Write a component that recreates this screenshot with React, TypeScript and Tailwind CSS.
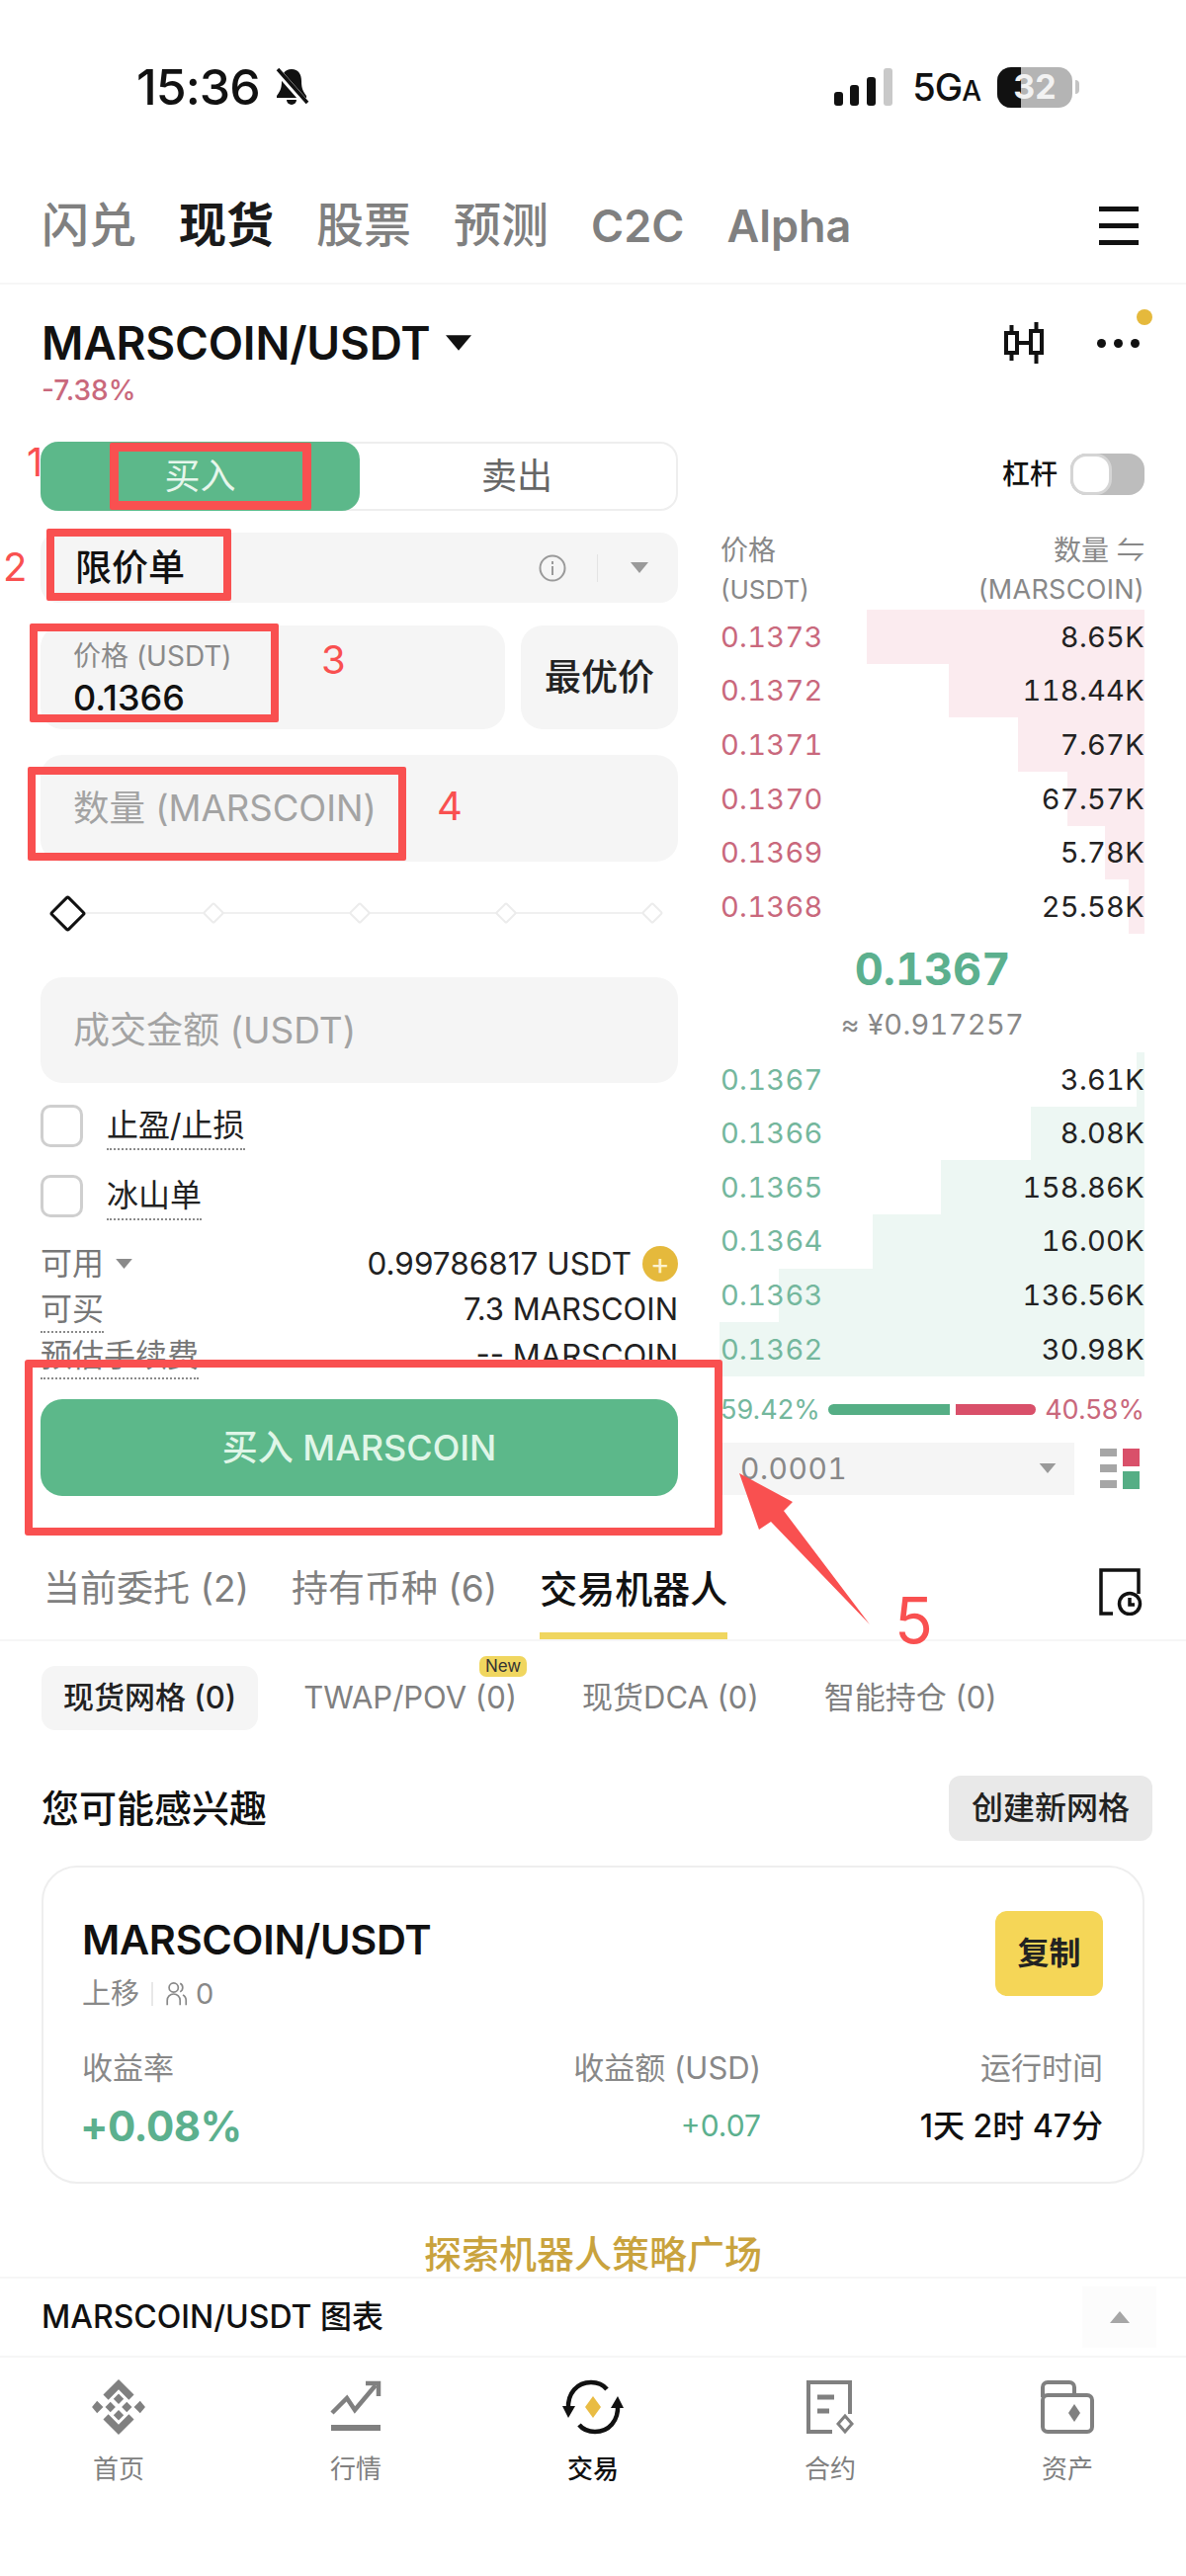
import { CSSProperties } from "react";

const asks = [
  { price: "0.1373", qty: "8.65K", depth: 281 },
  { price: "0.1372", qty: "118.44K", depth: 198 },
  { price: "0.1371", qty: "7.67K", depth: 128 },
  { price: "0.1370", qty: "67.57K", depth: 78 },
  { price: "0.1369", qty: "5.78K", depth: 40 },
  { price: "0.1368", qty: "25.58K", depth: 16 },
];

const bids = [
  { price: "0.1367", qty: "3.61K", depth: 8 },
  { price: "0.1366", qty: "8.08K", depth: 115 },
  { price: "0.1365", qty: "158.86K", depth: 206 },
  { price: "0.1364", qty: "16.00K", depth: 275 },
  { price: "0.1363", qty: "136.56K", depth: 370 },
  { price: "0.1362", qty: "30.98K", depth: 430 },
];

const Caret = ({ className, up }: { className: string; up?: boolean }) => (
  <svg viewBox="0 0 20 12" className={className} fill="currentColor">
    <polygon points={up ? "10,0 20,12 0,12" : "0,0 20,0 10,12"} />
  </svg>
);

const BookRow = ({
  price,
  qty,
  depth,
  side,
}: {
  price: string;
  qty: string;
  depth: number;
  side: "ask" | "bid";
}) => {
  const barStyle: CSSProperties = { width: depth };
  return (
    <div className="relative flex h-[54.67px] items-center justify-between text-[29px] tabular-nums tracking-[0.3px]">
      <div
        className={`absolute right-0 top-0 h-full ${side === "ask" ? "bg-[#fbebef]" : "bg-[#edf7f3]"}`}
        style={barStyle}
      />
      <span className={`relative ${side === "ask" ? "text-[#c9687c]" : "text-[#74b79d]"}`}>{price}</span>
      <span className="relative text-[#222]">{qty}</span>
    </div>
  );
};

const StatusBar = () => (
  <div className="flex h-[40px] items-center justify-between pl-[138px] pr-[108px]">
    <div className="flex items-center gap-[14px]">
      <span className="text-[50px] font-medium leading-none tracking-[-1px] text-[#111]">15:36</span>
      <svg viewBox="0 0 36 40" className="h-[40px] w-[36px]">
        <path d="M18 2c-7 0-10 5-10 12 0 8-2 11-5 15v2h30v-2c-3-4-5-7-5-15 0-7-3-12-10-12z" fill="#111" />
        <path d="M13 33a5 5 0 0 0 10 0z" fill="#111" />
        <path d="M3 3l30 34" stroke="#fff" strokeWidth="7" />
        <path d="M4 2l30 34" stroke="#111" strokeWidth="3.5" />
      </svg>
    </div>
    <div className="flex items-center">
      <svg viewBox="0 0 60 38" className="h-[38px] w-[60px]">
        <rect x="0" y="24" width="9" height="14" rx="3" fill="#111" />
        <rect x="16" y="17" width="9" height="21" rx="3" fill="#111" />
        <rect x="33" y="9" width="9" height="29" rx="3" fill="#111" />
        <rect x="50" y="0" width="9" height="38" rx="3" fill="#c9c9c9" />
      </svg>
      <span className="ml-[19px] text-[38px] font-medium leading-none tracking-[-1px] text-[#111]">
        5G<span className="text-[28px]">A</span>
      </span>
      <div className="relative ml-[17px] flex h-[41px] w-[76px] items-center justify-center overflow-hidden rounded-[14px] bg-[#b4b4b4]">
        <div className="absolute left-0 top-0 h-full w-[24px] bg-[#111]" />
        <span className="relative text-[34px] font-bold leading-none text-[#f2f2f2]">32</span>
      </div>
      <div className="ml-[3px] h-[14px] w-[4px] rounded-r-full bg-[#c4c4c4]" />
    </div>
  </div>
);

const TopTabs = () => (
  <div className="mt-[85px] flex h-[70px] items-center justify-between pl-[42px] pr-[48px]">
    <div className="flex items-center gap-[43px] text-[48px] font-medium leading-none text-[#808080]">
      <span>闪兑</span>
      <span className="font-bold text-[#1a1a1a]">现货</span>
      <span>股票</span>
      <span>预测</span>
      <span className="text-[45px] font-semibold">C2C</span>
      <span className="text-[45px] font-semibold">Alpha</span>
    </div>
    <div className="flex flex-col gap-[12px]">
      <div className="h-[5px] w-[40px] bg-[#111]" />
      <div className="h-[5px] w-[40px] bg-[#111]" />
      <div className="h-[5px] w-[40px] bg-[#111]" />
    </div>
  </div>
);

const PairHeader = () => (
  <div className="flex items-start justify-between pl-[42px] pr-[34px] pt-[27px]">
    <div>
      <div className="flex h-[64px] items-center">
        <span className="text-[46px] font-semibold leading-none tracking-[-0.2px] text-[#111]">MARSCOIN/USDT</span>
        <Caret className="ml-[16px] h-[16px] w-[26px] text-[#111]" />
      </div>
      <div className="mt-[-4px] text-[28px] font-medium leading-[40px] text-[#c9687c]">-7.38%</div>
    </div>
    <div className="relative flex h-[64px] items-center gap-[54px] pr-[13px]">
      <svg viewBox="0 0 40 46" className="h-[46px] w-[40px]" fill="none" stroke="#111" strokeWidth="4">
        <rect x="2" y="13" width="11" height="20" />
        <rect x="27" y="11" width="11" height="22" />
        <path d="M7.5 5v8M7.5 33v8M32.5 2v9M32.5 33v11M13 23h14" />
      </svg>
      <div className="flex gap-[8px]">
        <div className="h-[9px] w-[9px] rounded-full bg-[#111]" />
        <div className="h-[9px] w-[9px] rounded-full bg-[#111]" />
        <div className="h-[9px] w-[9px] rounded-full bg-[#111]" />
      </div>
      <div className="absolute right-0 top-[-2px] h-[16px] w-[16px] rounded-full bg-[#e5b93c]" />
    </div>
  </div>
);

const OrderForm = () => (
  <div className="w-[645px]">
    {/* Buy / sell switch */}
    <div className="flex h-[70px] rounded-[18px] border-2 border-[#eeeeee] text-[36px]">
      <div className="m-[-2px] flex w-[323px] items-center justify-center rounded-[18px] bg-[#5cb88a] text-[#e6f6ec]">
        买入
      </div>
      <div className="flex flex-1 items-center justify-center text-[#666]">卖出</div>
    </div>

    <div className="mt-[22px] flex h-[71px] items-center rounded-[18px] bg-[#f5f5f5] pl-[35px] pr-[30px]">
      <span className="text-[37px] font-medium text-[#111]">限价单</span>
      <svg viewBox="0 0 28 28" className="ml-auto h-[28px] w-[28px]" fill="none" stroke="#9a9a9a" strokeWidth="2">
        <circle cx="14" cy="14" r="12.5" />
        <path d="M14 12v9M14 7v3" />
      </svg>
      <div className="ml-[31px] h-[28px] w-[1px] bg-[#e4e4e4]" />
      <Caret className="ml-[33px] h-[11px] w-[18px] text-[#9a9a9a]" />
    </div>

    <div className="mt-[23px] flex gap-[16px]">
      <div className="flex h-[105px] w-[470px] flex-col justify-center rounded-[22px] bg-[#f5f5f5] pl-[33px]">
        <div className="text-[28px] leading-[40px] text-[#8a8a8a]">价格 (USDT)</div>
        <div className="text-[36px] font-medium leading-[44px] text-[#111]">0.1366</div>
      </div>
      <div className="flex h-[105px] flex-1 items-center justify-center rounded-[22px] bg-[#f5f5f5] text-[37px] font-medium text-[#222]">
        最优价
      </div>
    </div>

    <div className="mt-[26px] flex h-[108px] items-center rounded-[22px] bg-[#f5f5f5] pl-[33px] text-[36.5px] text-[#a3a3a3]">
      数量 (MARSCOIN)
    </div>

    {/* Percentage slider */}
    <div className="relative mt-[32px] flex h-[40px] items-center justify-between pl-[7px] pr-[6px]">
      <div className="absolute left-[27px] right-[26px] top-[19px] h-[2px] bg-[#f0f0f0]" />
      <div className="relative flex w-[40px] justify-center">
        <div className="h-[27px] w-[27px] rotate-45 rounded-[3px] border-[3px] border-[#111] bg-white" />
      </div>
      {[0, 1, 2, 3].map((i) => (
        <div key={i} className="relative flex w-[40px] justify-center">
          <div className="h-[16px] w-[16px] rotate-45 rounded-[2px] border-2 border-[#ececec] bg-white" />
        </div>
      ))}
    </div>

    <div className="mt-[45px] flex h-[107px] items-center rounded-[22px] bg-[#f5f5f5] pl-[33px] text-[37px] text-[#a3a3a3]">
      成交金额 (USDT)
    </div>

    <div className="mt-[22px] flex h-[43px] items-center gap-[24px]">
      <div className="h-[43px] w-[43px] rounded-[10px] border-[3px] border-[#cfcfcf]" />
      <span className="h-[48px] border-b-2 border-dotted border-[#8a8a8a] text-[32px] leading-[46px] text-[#222]">
        止盈/止损
      </span>
    </div>
    <div className="mt-[28px] flex h-[43px] items-center gap-[24px]">
      <div className="h-[43px] w-[43px] rounded-[10px] border-[3px] border-[#cfcfcf]" />
      <span className="h-[48px] border-b-2 border-dotted border-[#8a8a8a] text-[32px] leading-[46px] text-[#222]">
        冰山单
      </span>
    </div>

    <div className="mt-[23px] text-[31px]">
      <div className="flex h-[47px] items-center justify-between">
        <div className="flex items-center gap-[12px] text-[32px] text-[#777]">
          可用
          <Caret className="h-[10px] w-[17px] text-[#8a8a8a]" />
        </div>
        <div className="flex items-center gap-[11px] text-[31.500px] text-[#222]">
          0.99786817 USDT
          <div className="flex h-[36px] w-[36px] items-center justify-center rounded-full bg-[#e5b93c] text-[30px] leading-none text-[#fdf3d0]">
            +
          </div>
        </div>
      </div>
      <div className="flex h-[47px] items-center justify-between">
        <span className="h-[47px] border-b-2 border-dotted border-[#8a8a8a] text-[32px] leading-[45px] text-[#777]">
          可买
        </span>
        <span className="text-[#222]">7.3 MARSCOIN</span>
      </div>
      <div className="flex h-[47px] items-center justify-between">
        <span className="h-[47px] border-b-2 border-dotted border-[#8a8a8a] text-[32px] leading-[45px] text-[#777]">
          预估手续费
        </span>
        <span className="text-[#222]">-- MARSCOIN</span>
      </div>
    </div>

    <div className="mt-[20px] flex h-[98px] items-center justify-center rounded-[22px] bg-[#5cb88a] text-[36px] font-medium text-[#e0f6e8]">
      买入 MARSCOIN
    </div>
  </div>
);

const OrderBook = () => (
  <div className="w-[429px]">
    <div className="mt-[12px] flex h-[42px] items-center justify-end gap-[13px]">
      <span className="text-[28px] font-medium text-[#111]">杠杆</span>
      <div className="flex h-[42px] w-[75px] rounded-[16px] bg-[#bdbdbd]">
        <div className="h-[42px] w-[42px] rounded-[16px] border-[3px] border-[#d5d5d5] bg-white" />
      </div>
    </div>

    <div className="mt-[36px] flex h-[80px] justify-between text-[27px] leading-[40px] text-[#888]">
      <div>
        <div className="text-[28px]">价格</div>
        <div className="text-[26px]">(USDT)</div>
      </div>
      <div className="text-right">
        <div className="text-[28px]">数量 ⇋</div>
        <div className="tracking-[0.3px]">(MARSCOIN)</div>
      </div>
    </div>

    {asks.map((row) => (
      <BookRow key={row.price} {...row} side="ask" />
    ))}

    <div className="flex h-[120px] flex-col items-center pt-[6px] tabular-nums">
      <div className="text-[45px] font-bold leading-[60px] text-[#5cb08e]">0.1367</div>
      <div className="mt-[6px] text-[29px] leading-[40px] tracking-[0.3px] text-[#888]">≈ ¥0.917257</div>
    </div>

    {bids.map((row) => (
      <BookRow key={row.price} {...row} side="bid" />
    ))}

    <div className="mt-[19px] flex h-[30px] items-center justify-between text-[27px]">
      <span className="text-[#74b79d]">59.42%</span>
      <div className="flex items-center gap-[6px]">
        <div className="h-[11px] w-[123px] rounded-l-full bg-[#55ae85]" />
        <div className="h-[11px] w-[81px] rounded-r-full bg-[#d9506a]" />
      </div>
      <span className="text-[#c9687c]">40.58%</span>
    </div>

    <div className="mt-[18px] flex items-center justify-between">
      <div className="flex h-[53px] w-[358px] items-center justify-between bg-[#f5f5f5] pl-[20px] pr-[18px] text-[30px] tabular-nums tracking-[0.5px] text-[#888]">
        0.0001
        <Caret className="h-[10px] w-[18px] text-[#9a9a9a]" />
      </div>
      <div className="mr-[5px] flex gap-[6px]">
        <div className="flex flex-col gap-[8px]">
          <div className="h-[8px] w-[17px] bg-[#a6a6a6]" />
          <div className="h-[8px] w-[17px] bg-[#a6a6a6]" />
          <div className="h-[8px] w-[17px] bg-[#a6a6a6]" />
        </div>
        <div className="flex flex-col gap-[5px]">
          <div className="h-[18px] w-[17px] bg-[#d9506a]" />
          <div className="h-[18px] w-[17px] bg-[#55ae85]" />
        </div>
      </div>
    </div>
  </div>
);

const HistoryTabs = () => (
  <div className="mt-[47px] flex h-[100px] items-stretch justify-between border-b-2 border-[#f6f6f6] pl-[44px] pr-[44px] text-[37px]">
    <div className="flex gap-[43px]">
      <div className="flex items-center border-b-[7px] border-transparent pt-[3px] text-[#808080]">当前委托 (2)</div>
      <div className="flex items-center border-b-[7px] border-transparent pt-[3px] text-[#808080]">持有币种 (6)</div>
      <div className="flex items-center border-b-[7px] border-[#f0d65f] pt-[3px] text-[38px] font-medium text-[#111]">
        交易机器人
      </div>
    </div>
    <svg viewBox="0 0 44 48" className="mt-[26px] h-[48px] w-[44px]" fill="none" stroke="#111" strokeWidth="3.5">
      <path d="M14 46H2V2h38v24" />
      <circle cx="31" cy="36" r="10.5" />
      <path d="M31 30v7h5" />
    </svg>
  </div>
);

const BotTabs = () => (
  <div className="mt-[25px] flex gap-[24px] pl-[42px] text-[31px] text-[#808080]">
    <div className="flex h-[65px] items-center rounded-[14px] bg-[#f5f5f5] px-[22px] font-medium text-[#222]">现货网格 (0)</div>
    <div className="relative flex h-[65px] items-center px-[22px]">
      TWAP/POV (0)
      <div className="absolute right-[12px] top-[-10px] flex h-[21px] w-[48px] items-center justify-center rounded-[7px] bg-[#f0d65f] text-[17px] text-[#333]">
        New
      </div>
    </div>
    <div className="flex h-[65px] items-center px-[20px]">现货DCA (0)</div>
    <div className="flex h-[65px] items-center px-[22px]">智能持仓 (0)</div>
  </div>
);

const BotCard = () => (
  <div className="ml-[42px] mt-[25px] h-[322px] w-[1116px] rounded-[36px] border-2 border-[#eeeeee] pl-[39px] pr-[40px] pt-[44px]">
    <div className="flex h-[86px] justify-between">
      <div>
        <div className="mt-[-1px] text-[41.500px] font-semibold leading-[60px] tracking-[-0.3px] text-[#111]">MARSCOIN/USDT</div>
        <div className="mt-[5px] flex h-[40px] items-center text-[29px] text-[#888]">
          上移
          <div className="mx-[12px] h-[24px] w-[2px] bg-[#e8e8e8]" />
          <svg viewBox="0 0 24 28" className="h-[26px] w-[23px]" fill="none" stroke="#888" strokeWidth="1.8">
            <circle cx="9" cy="7" r="5" />
            <path d="M2 26v-5c0-4 3-7 7-7s7 3 7 7v5M16 2.5a5 5 0 0 1 0 9M19 15c2 1 3.500 3 3.500 6v5" />
          </svg>
          <span className="ml-[8px]">0</span>
        </div>
      </div>
      <div className="flex h-[86px] w-[109px] items-center justify-center rounded-[12px] bg-[#f5d657] text-[32px] font-bold text-[#222]">
        复制
      </div>
    </div>
    <div className="mt-[53px] grid grid-cols-[400px_287px_1fr] text-[31px] leading-[40px] text-[#888]">
      <div>收益率</div>
      <div className="text-right">收益额 (USD)</div>
      <div className="text-right">运行时间</div>
    </div>
    <div className="mt-[7px] grid h-[60px] grid-cols-[400px_287px_1fr] items-center">
      <div className="ml-[-2px] text-[42px] font-bold tracking-[-0.5px] text-[#5cb08e]">+0.08%</div>
      <div className="text-right text-[30px] text-[#5cb08e]">+0.07</div>
      <div className="text-right text-[32px] font-medium text-[#111]">1天 2时 47分</div>
    </div>
  </div>
);

const HomeIcon = () => (
  <svg viewBox="0 0 52 54" className="h-[56px] w-[56px]" fill="#808080">
    <polygon points="26,0 41,15 36,20 26,10 16,20 11,15" />
    <polygon points="26,54 41,39 36,34 26,44 16,34 11,39" />
    <polygon points="5,21 11,27 5,33 0,27" />
    <polygon points="47,21 52,27 47,33 41,27" />
    <polygon points="26,14 31,19 26,24 21,19" />
    <polygon points="26,30 31,35 26,40 21,35" />
    <polygon points="18,22 23,27 18,32 13,27" />
    <polygon points="34,22 39,27 34,32 29,27" />
  </svg>
);

const MarketIcon = () => (
  <svg viewBox="0 0 56 56" className="h-[56px] w-[56px]" fill="none" stroke="#808080" strokeWidth="4.500">
    <path d="M4 34l15-15 8 12 21-25" />
    <path d="M38 4h13v13" />
    <path d="M3 49h50" strokeWidth="6" />
  </svg>
);

const TradeIcon = () => (
  <svg viewBox="0 0 64 56" className="h-[56px] w-[64px]" fill="none" stroke="#111" strokeWidth="4.500">
    <path d="M7 30C6 14 16 3 30 3c7 0 12 2 16 7" />
    <path d="M57 26c1 16-9 27-23 27-7 0-12-2-16-7" />
    <polygon points="1,27 14,27 7,39" fill="#111" stroke="none" />
    <polygon points="50,29 63,29 57,17" fill="#111" stroke="none" />
    <polygon points="32,17 40,28 32,39 24,28" fill="#e9bc43" stroke="none" />
  </svg>
);

const FuturesIcon = () => (
  <svg viewBox="0 0 48 54" className="h-[54px] w-[48px]" fill="none" stroke="#808080" strokeWidth="4">
    <path d="M26 52H2V2h42v32" />
    <path d="M11 17h17M11 31h12" strokeWidth="5" />
    <polygon points="39,36 46,44 39,52 32,44" strokeWidth="3" />
  </svg>
);

const AssetsIcon = () => (
  <svg viewBox="0 0 54 54" className="h-[54px] w-[54px]" fill="none" stroke="#808080" strokeWidth="4">
    <path d="M2 17V7a5 5 0 0 1 5-5h22a5 5 0 0 1 5 5v8" />
    <rect x="2" y="15" width="50" height="37" rx="5" />
    <polygon points="34,24 40,33 34,42 28,33" fill="#808080" stroke="none" />
  </svg>
);

const navItems = [
  { label: "首页", icon: <HomeIcon /> },
  { label: "行情", icon: <MarketIcon /> },
  { label: "交易", icon: <TradeIcon />, active: true },
  { label: "合约", icon: <FuturesIcon /> },
  { label: "资产", icon: <AssetsIcon /> },
];

const BottomNav = () => (
  <div className="grid grid-cols-5 pt-[22px]">
    {navItems.map((item) => (
      <div key={item.label} className="flex flex-col items-center">
        <div className="flex h-[56px] items-center justify-center">{item.icon}</div>
        <div
          className={`mt-[17px] text-[26px] leading-[36px] ${item.active ? "font-medium text-[#111]" : "text-[#808080]"}`}
        >
          {item.label}
        </div>
      </div>
    ))}
  </div>
);

// Red tutorial marks painted over the page
const Marks = () => (
  <>
    <div className="absolute left-[111px] top-[448px] h-[68px] w-[204px] rounded-[2px] border-[9px] border-[#f95050]" />
    <div className="absolute left-[47px] top-[535px] h-[73px] w-[187px] rounded-[2px] border-[8px] border-[#f95050]" />
    <div className="absolute left-[30px] top-[631px] h-[100px] w-[252px] rounded-[2px] border-[8px] border-[#f95050]" />
    <div className="absolute left-[28px] top-[776px] h-[95px] w-[383px] rounded-[2px] border-[8px] border-[#f95050]" />
    <div className="absolute left-[25px] top-[1376px] h-[178px] w-[706px] rounded-[3px] border-[8px] border-[#f95050]" />
    <div className="absolute left-[27px] top-[440px] text-[40px] leading-[56px] text-[#f95050]">1</div>
    <div className="absolute left-[3px] top-[546px] text-[40px] leading-[56px] text-[#f95050]">2</div>
    <div className="absolute left-[325px] top-[640px] text-[40px] leading-[56px] text-[#f95050]">3</div>
    <div className="absolute left-[442px] top-[788px] text-[40px] leading-[56px] text-[#f95050]">4</div>
    <div className="absolute left-[905px] top-[1596px] text-[64px] leading-[88px] text-[#f95050]">5</div>
    <svg viewBox="0 0 140 160" className="absolute left-[745px] top-[1488px] h-[160px] w-[140px]" fill="#f95050">
      <polygon points="3,3 57,32 48,41 135,156 35,52 23,60" />
    </svg>
  </>
);

export default function App() {
  return (
    <div className="relative h-[2607px] w-[1200px] overflow-hidden bg-white font-[Inter,'Noto_Sans_CJK_SC',sans-serif]">
      <div className="h-[288px] border-b-2 border-[#f6f6f6] pt-[68px]">
        <StatusBar />
        <TopTabs />
      </div>

      <PairHeader />

      <div className="mt-[32px] flex items-start gap-[43px] pl-[41px]">
        <OrderForm />
        <OrderBook />
      </div>

      <HistoryTabs />
      <BotTabs />

      <div className="mt-[46px] flex h-[66px] items-center justify-between pl-[42px] pr-[34px]">
        <span className="text-[38px] font-medium text-[#111]">您可能感兴趣</span>
        <div className="flex h-[66px] w-[206px] items-center justify-center rounded-[12px] bg-[#e9e9e9] text-[32px] font-medium text-[#222]">
          创建新网格
        </div>
      </div>

      <BotCard />

      <div className="h-[94px] pt-[48px] text-center text-[38px] font-medium leading-[46px] text-[#c9a33e]">
        探索机器人策略广场
      </div>

      <div className="flex h-[82px] items-center justify-between border-y-2 border-[#f6f6f6] pl-[42px] pr-[30px]">
        <span className="text-[32px] font-medium text-[#111]">MARSCOIN/USDT 图表</span>
        <div className="flex h-[62px] w-[75px] items-center justify-center bg-[#fcfcfc]">
          <Caret up className="h-[14px] w-[20px] text-[#a6a6a6]" />
        </div>
      </div>

      <BottomNav />
      <Marks />
    </div>
  );
}
